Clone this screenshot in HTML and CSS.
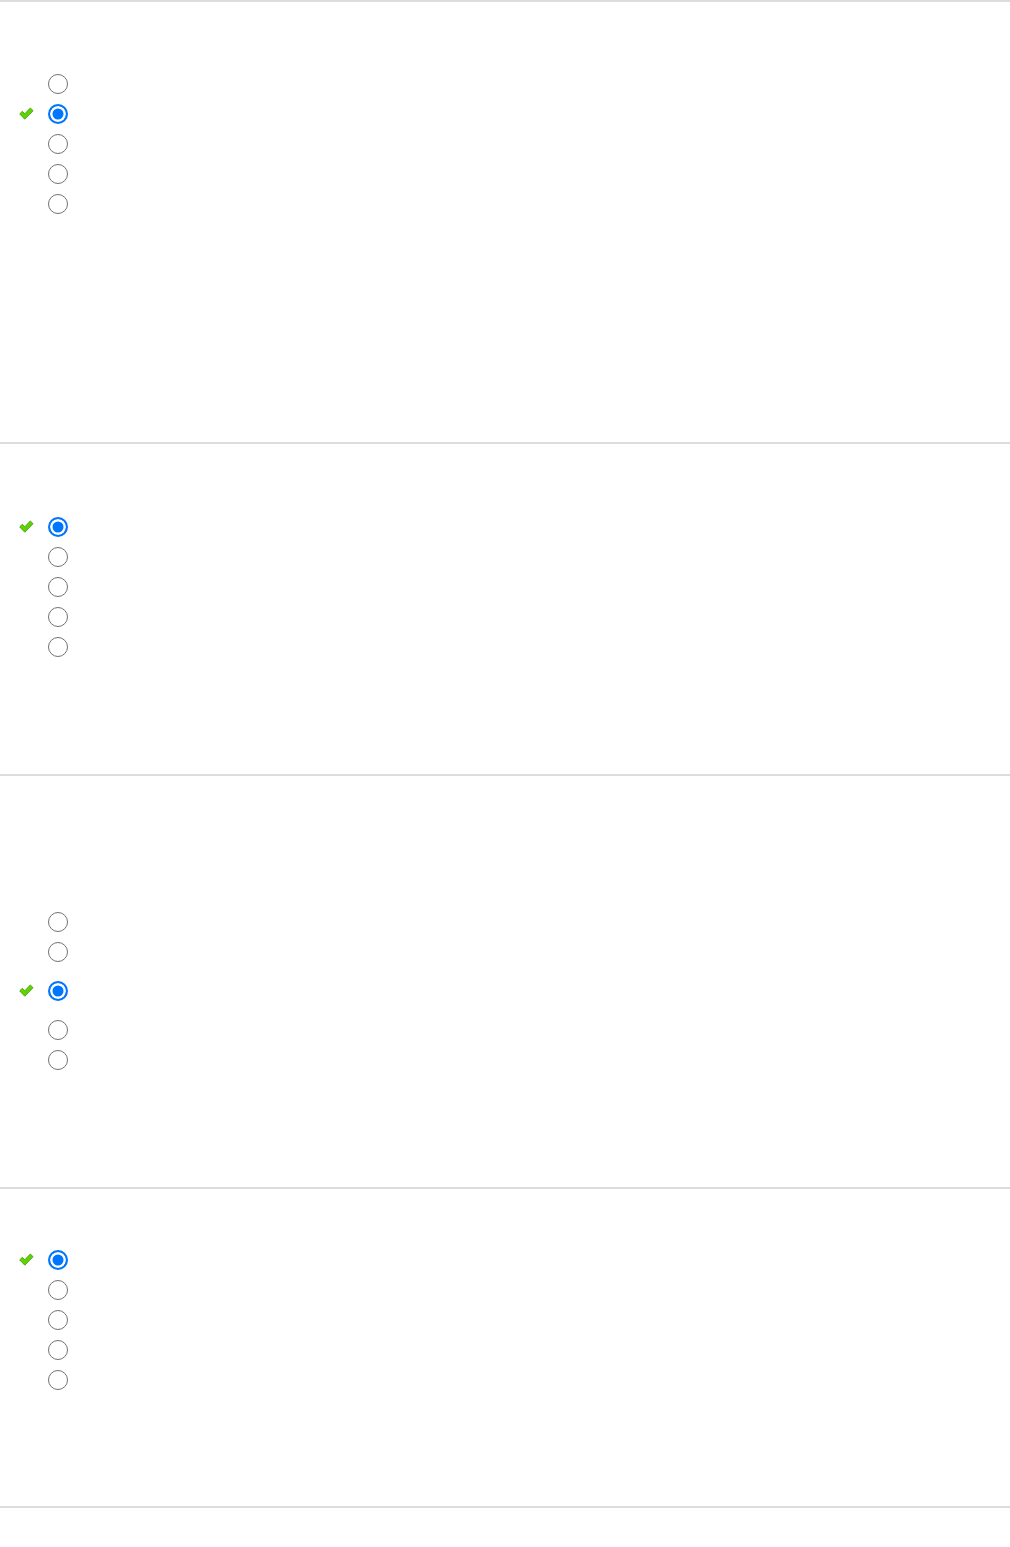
FILE: index.html
```html
<!DOCTYPE html>
<html lang="en">
  <head>
    <meta charset="UTF-8" />
    <meta name="viewport" content="width=device-width, initial-scale=1.0" />
    <title>Quiz review</title>

    <link rel="stylesheet" href="styles.css">
  </head>
  <body>
    <div class="question q1">
      <div class="answer"><span class="mark"></span><input type="radio" name="q1" /></div>
      <div class="answer"><span class="mark"><svg viewBox="0 0 15 13"><path d="M0.7 6.9 L3.3 4.3 L5.8 6.8 L11.3 1 L14.1 3.7 L5.8 12.2 Z" /></svg></span><input type="radio" name="q1" checked /></div>
      <div class="answer"><span class="mark"></span><input type="radio" name="q1" /></div>
      <div class="answer"><span class="mark"></span><input type="radio" name="q1" /></div>
      <div class="answer"><span class="mark"></span><input type="radio" name="q1" /></div>
    </div>

    <div class="question q2">
      <div class="answer"><span class="mark"><svg viewBox="0 0 15 13"><path d="M0.7 6.9 L3.3 4.3 L5.8 6.8 L11.3 1 L14.1 3.7 L5.8 12.2 Z" /></svg></span><input type="radio" name="q2" checked /></div>
      <div class="answer"><span class="mark"></span><input type="radio" name="q2" /></div>
      <div class="answer"><span class="mark"></span><input type="radio" name="q2" /></div>
      <div class="answer"><span class="mark"></span><input type="radio" name="q2" /></div>
      <div class="answer"><span class="mark"></span><input type="radio" name="q2" /></div>
    </div>

    <div class="question q3">
      <div class="answer"><span class="mark"></span><input type="radio" name="q3" /></div>
      <div class="answer"><span class="mark"></span><input type="radio" name="q3" /></div>
      <div class="answer tall"><span class="mark"><svg viewBox="0 0 15 13"><path d="M0.7 6.9 L3.3 4.3 L5.8 6.8 L11.3 1 L14.1 3.7 L5.8 12.2 Z" /></svg></span><input type="radio" name="q3" checked /></div>
      <div class="answer"><span class="mark"></span><input type="radio" name="q3" /></div>
      <div class="answer"><span class="mark"></span><input type="radio" name="q3" /></div>
    </div>

    <div class="question q4">
      <div class="answer"><span class="mark"><svg viewBox="0 0 15 13"><path d="M0.7 6.9 L3.3 4.3 L5.8 6.8 L11.3 1 L14.1 3.7 L5.8 12.2 Z" /></svg></span><input type="radio" name="q4" checked /></div>
      <div class="answer"><span class="mark"></span><input type="radio" name="q4" /></div>
      <div class="answer"><span class="mark"></span><input type="radio" name="q4" /></div>
      <div class="answer"><span class="mark"></span><input type="radio" name="q4" /></div>
      <div class="answer"><span class="mark"></span><input type="radio" name="q4" /></div>
    </div>

    <div class="question end"></div>
  </body>
</html>
```

FILE: styles.css
```css
body {
  margin: 0;
  background: #fff;
  font-family: "Liberation Sans", Arial, sans-serif;
}

.question {
  border-top: 2px solid #dcdcdc;
}

.q1 {
  padding: 67px 0 223px;
}

.q2 {
  padding: 68px 0 112px;
}

.q3 {
  padding: 131px 0 112px;
}

.q4 {
  padding: 56px 0 111px;
}

.answer {
  display: flex;
  align-items: center;
  height: 30px;
  padding-left: 19px;
}

.answer.tall {
  height: 48px;
}

.mark {
  display: flex;
  width: 15px;
  height: 13px;
  margin-right: 14px;
  margin-top: -2px;
}

.mark svg {
  width: 15px;
  height: 13px;
}

.mark path {
  fill: #5ed400;
  stroke: #48a012;
  stroke-width: 0.9;
  stroke-linejoin: round;
}

.answer input {
  appearance: none;
  box-sizing: border-box;
  width: 20px;
  height: 20px;
  margin: 0;
  border: 1.6px solid #727272;
  border-radius: 50%;
  background: #fff;
}

.answer input:checked {
  border: 2px solid #0075ff;
  background: #0075ff;
  box-shadow: inset 0 0 0 2.5px #fff;
}
```
